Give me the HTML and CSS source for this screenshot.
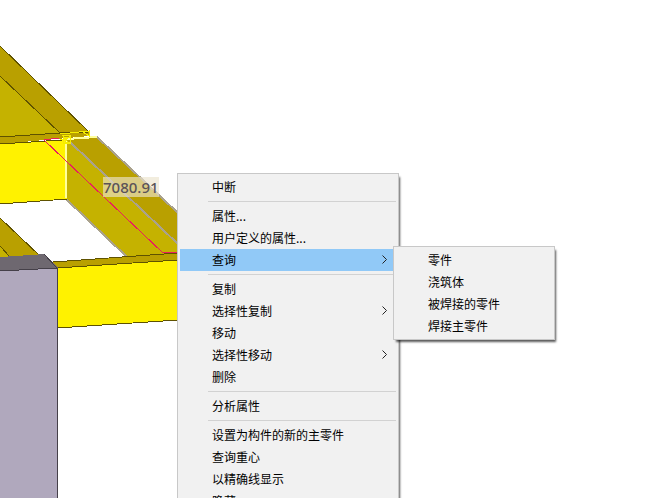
FILE: index.html
```html
<!DOCTYPE html>
<html lang="zh-CN">
<head>
    <meta charset="utf-8">
    <title>模型视图</title>
    <link rel="stylesheet" href="styles.css">
</head>
<body>
    <main class="viewport">
        <svg class="model" width="657" height="498" viewBox="0 0 657 498" shape-rendering="crispEdges" aria-hidden="true">
            <!-- upper left roof -->
            <polygon class="side" points="0,46 90,132 90,136 60,133 0,76"/>
            <polygon class="face" points="0,76 60,133 0,138"/>
            <polygon class="front" points="0,144 67,139 67,199 0,204"/>
            <polygon class="side" points="0,137 60,133 90,131 90,136 0,144"/>
            <path class="edge" d="M0 46L89 132M0 76L60 133M0 137L60 133L88 132M0 144L62 140M0 204L67 199"/>

            <!-- selected beam -->
            <polygon class="face" points="67,139 97,137 178,213 178,254 127,257 67,200"/>
            <polygon class="side" points="69,140 97,137 178,213 178,244"/>
            <path class="outline" d="M97 137L178 213M71 143L178 244M67 200L127 257"/>
            <path class="glow" d="M66 140V198M67 139L97 137"/>

            <!-- lower beam -->
            <polygon class="side" points="53,262 178,253 178,261 57,268"/>
            <polygon class="front" points="57,268 178,260 178,320 57,328"/>
            <path class="edge" d="M53 262L178 253M57 268L178 260M57 328L178 320"/>

            <!-- column -->
            <polygon class="side" points="0,218 40,256 0,259"/>
            <polygon class="face" points="0,246 10,257 0,258"/>
            <path class="edge" d="M0 218L40 256M0 246L10 257"/>
            <polygon class="cap" points="0,257 45,254 58,268 0,271"/>
            <polygon class="column" points="0,271 57,268 57,498 0,498"/>
            <path class="edge-dark" d="M44 254L57 268V498M0 271L57 268"/>

            <!-- snap handle and measure line -->
            <path class="measure" d="M59 138L44 140L163 253L178 252"/>
            <path class="handle" d="M60 134L89 131V136L83 132M62 135H70V143H63V136L68 142M65 140L70 136"/>
            <circle class="handle" cx="68" cy="140" r="3"/>
        </svg>

        <span class="dimension">7080.91</span>

        <ul class="menu" role="menu">
            <li><button>中断</button></li>
            <li class="separator"></li>
            <li><button>属性...</button></li>
            <li><button>用户定义的属性...</button></li>
            <li class="open">
                <button>查询<svg class="arrow" viewBox="0 0 5 9"><path d="M0.5 0.5L4.5 4.5L0.5 8.5"/></svg></button>
                <ul class="menu submenu" role="menu">
                    <li><button>零件</button></li>
                    <li><button>浇筑体</button></li>
                    <li><button>被焊接的零件</button></li>
                    <li><button>焊接主零件</button></li>
                </ul>
            </li>
            <li class="separator"></li>
            <li><button>复制</button></li>
            <li><button>选择性复制<svg class="arrow" viewBox="0 0 5 9"><path d="M0.5 0.5L4.5 4.5L0.5 8.5"/></svg></button></li>
            <li><button>移动</button></li>
            <li><button>选择性移动<svg class="arrow" viewBox="0 0 5 9"><path d="M0.5 0.5L4.5 4.5L0.5 8.5"/></svg></button></li>
            <li><button>删除</button></li>
            <li class="separator"></li>
            <li><button>分析属性</button></li>
            <li class="separator"></li>
            <li><button>设置为构件的新的主零件</button></li>
            <li><button>查询重心</button></li>
            <li><button>以精确线显示</button></li>
            <li><button>隐藏</button></li>
        </ul>
    </main>
</body>
</html>
```
FILE: styles.css
```css
* {
    box-sizing: border-box;
}

body {
    margin: 0;
    background-color: #fff;
    font-family: "Noto Sans CJK SC", sans-serif;
    font-size: 12px;
}

.viewport {
    position: relative;
    height: 100vh;
    overflow: hidden;
}

/* Model */
.model {
    display: block;
}

.side {
    fill: #b9a000;
}

.face {
    fill: #c5b200;
}

.front {
    fill: #fff200;
}

.cap {
    fill: #6e6870;
}

.column {
    fill: #b0a8bd;
}

.edge,
.edge-dark,
.outline,
.glow,
.measure,
.handle {
    fill: none;
    stroke-width: 1;
}

.edge {
    stroke: #5f5200;
}

.edge-dark {
    stroke: #454049;
}

.outline {
    stroke: #aaa28c;
    stroke-width: 2;
}

.glow {
    stroke: #ffff9c;
    stroke-width: 2;
}

.measure {
    stroke: #e8205c;
}

.handle {
    stroke: #f5ee00;
}

.dimension {
    position: absolute;
    left: 103px;
    top: 177px;
    background-color: rgba(235, 228, 205, 0.65);
    color: #5a5357;
    font-family: "Noto Sans", sans-serif;
    font-size: 15px;
    font-weight: 500;
    line-height: 20px;
}

/* Context menu */
.menu {
    position: absolute;
    left: 177px;
    top: 173px;
    width: 222px;
    margin: 0;
    padding: 2px;
    list-style: none;
    background-color: #f1f1f1;
    border: 1px solid #c8c8c8;
    box-shadow: 2px 3px 2px -1px rgba(0, 0, 0, 0.65);
}

.menu li {
    position: relative;
}

.menu button {
    display: flex;
    align-items: center;
    justify-content: space-between;
    width: 100%;
    height: 22px;
    padding: 0 9px 2px 32px;
    border: none;
    background: none;
    color: #000;
    font: inherit;
    text-align: left;
}

.menu button:hover,
.menu .open > button {
    background-color: #91c9f7;
}

.menu .separator {
    height: 1px;
    margin: 3px 0 3px 28px;
    background-color: #d2d2d2;
}

.arrow {
    width: 5px;
    height: 9px;
    fill: none;
    stroke: #222;
    overflow: visible;
}

.menu .submenu {
    left: calc(100% - 3px);
    top: -3px;
    width: 162px;
    z-index: 1;
}
```
